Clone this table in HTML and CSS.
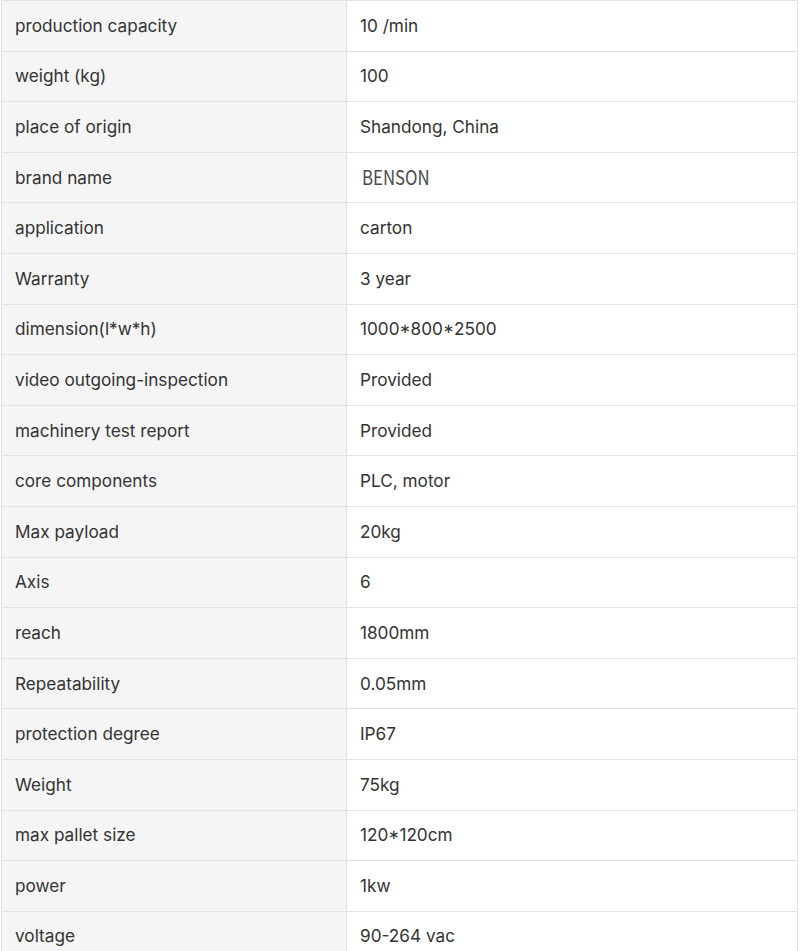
FILE: index.html
```html
<!DOCTYPE html>
<html>
<head>
<meta charset="utf-8">
<link rel="stylesheet" href="styles.css">
</head>
<body>
<table class="spec">
<tbody>
<tr><td class="k">production capacity</td><td class="v">10 /min</td></tr>
<tr><td class="k">weight (kg)</td><td class="v">100</td></tr>
<tr><td class="k">place of origin</td><td class="v">Shandong, China</td></tr>
<tr><td class="k">brand name</td><td class="v"><span class="brand">BENSON</span></td></tr>
<tr><td class="k">application</td><td class="v">carton</td></tr>
<tr><td class="k">Warranty</td><td class="v">3 year</td></tr>
<tr><td class="k">dimension(l*w*h)</td><td class="v">1000*800*2500</td></tr>
<tr><td class="k">video outgoing-inspection</td><td class="v">Provided</td></tr>
<tr><td class="k">machinery test report</td><td class="v">Provided</td></tr>
<tr><td class="k">core components</td><td class="v">PLC, motor</td></tr>
<tr><td class="k">Max payload</td><td class="v">20kg</td></tr>
<tr><td class="k">Axis</td><td class="v">6</td></tr>
<tr><td class="k">reach</td><td class="v">1800mm</td></tr>
<tr><td class="k">Repeatability</td><td class="v">0.05mm</td></tr>
<tr><td class="k">protection degree</td><td class="v">IP67</td></tr>
<tr><td class="k">Weight</td><td class="v">75kg</td></tr>
<tr><td class="k">max pallet size</td><td class="v">120*120cm</td></tr>
<tr><td class="k">power</td><td class="v">1kw</td></tr>
<tr><td class="k">voltage</td><td class="v">90-264 vac</td></tr>
</tbody>
</table>
</body>
</html>
```
FILE: styles.css
```css
html, body {
  margin: 0;
  padding: 0;
  background: #ffffff;
}
body {
  padding-left: 1px;
  font-family: Inter, "Noto Sans", sans-serif;
  color: #333333;
}
.spec {
  border-collapse: collapse;
  width: 797px;
  table-layout: fixed;
}
.spec td {
  border: 1px solid #e2e2e2;
  height: 50.6px;
  padding: 0 13px;
  font-size: 17.2px;
  line-height: 20px;
  vertical-align: middle;
  box-sizing: border-box;
}
.spec td.k {
  width: 345px;
  background: #f5f5f5;
}
.spec td.v {
  background: #ffffff;
}
.brand {
  display: inline-block;
  font-family: "Noto Sans CJK SC", sans-serif;
  font-size: 20px;
  line-height: 20px;
  color: #4a4a4a;
  margin-left: 2px;
  transform: scaleX(0.84);
  transform-origin: left center;
}
```
